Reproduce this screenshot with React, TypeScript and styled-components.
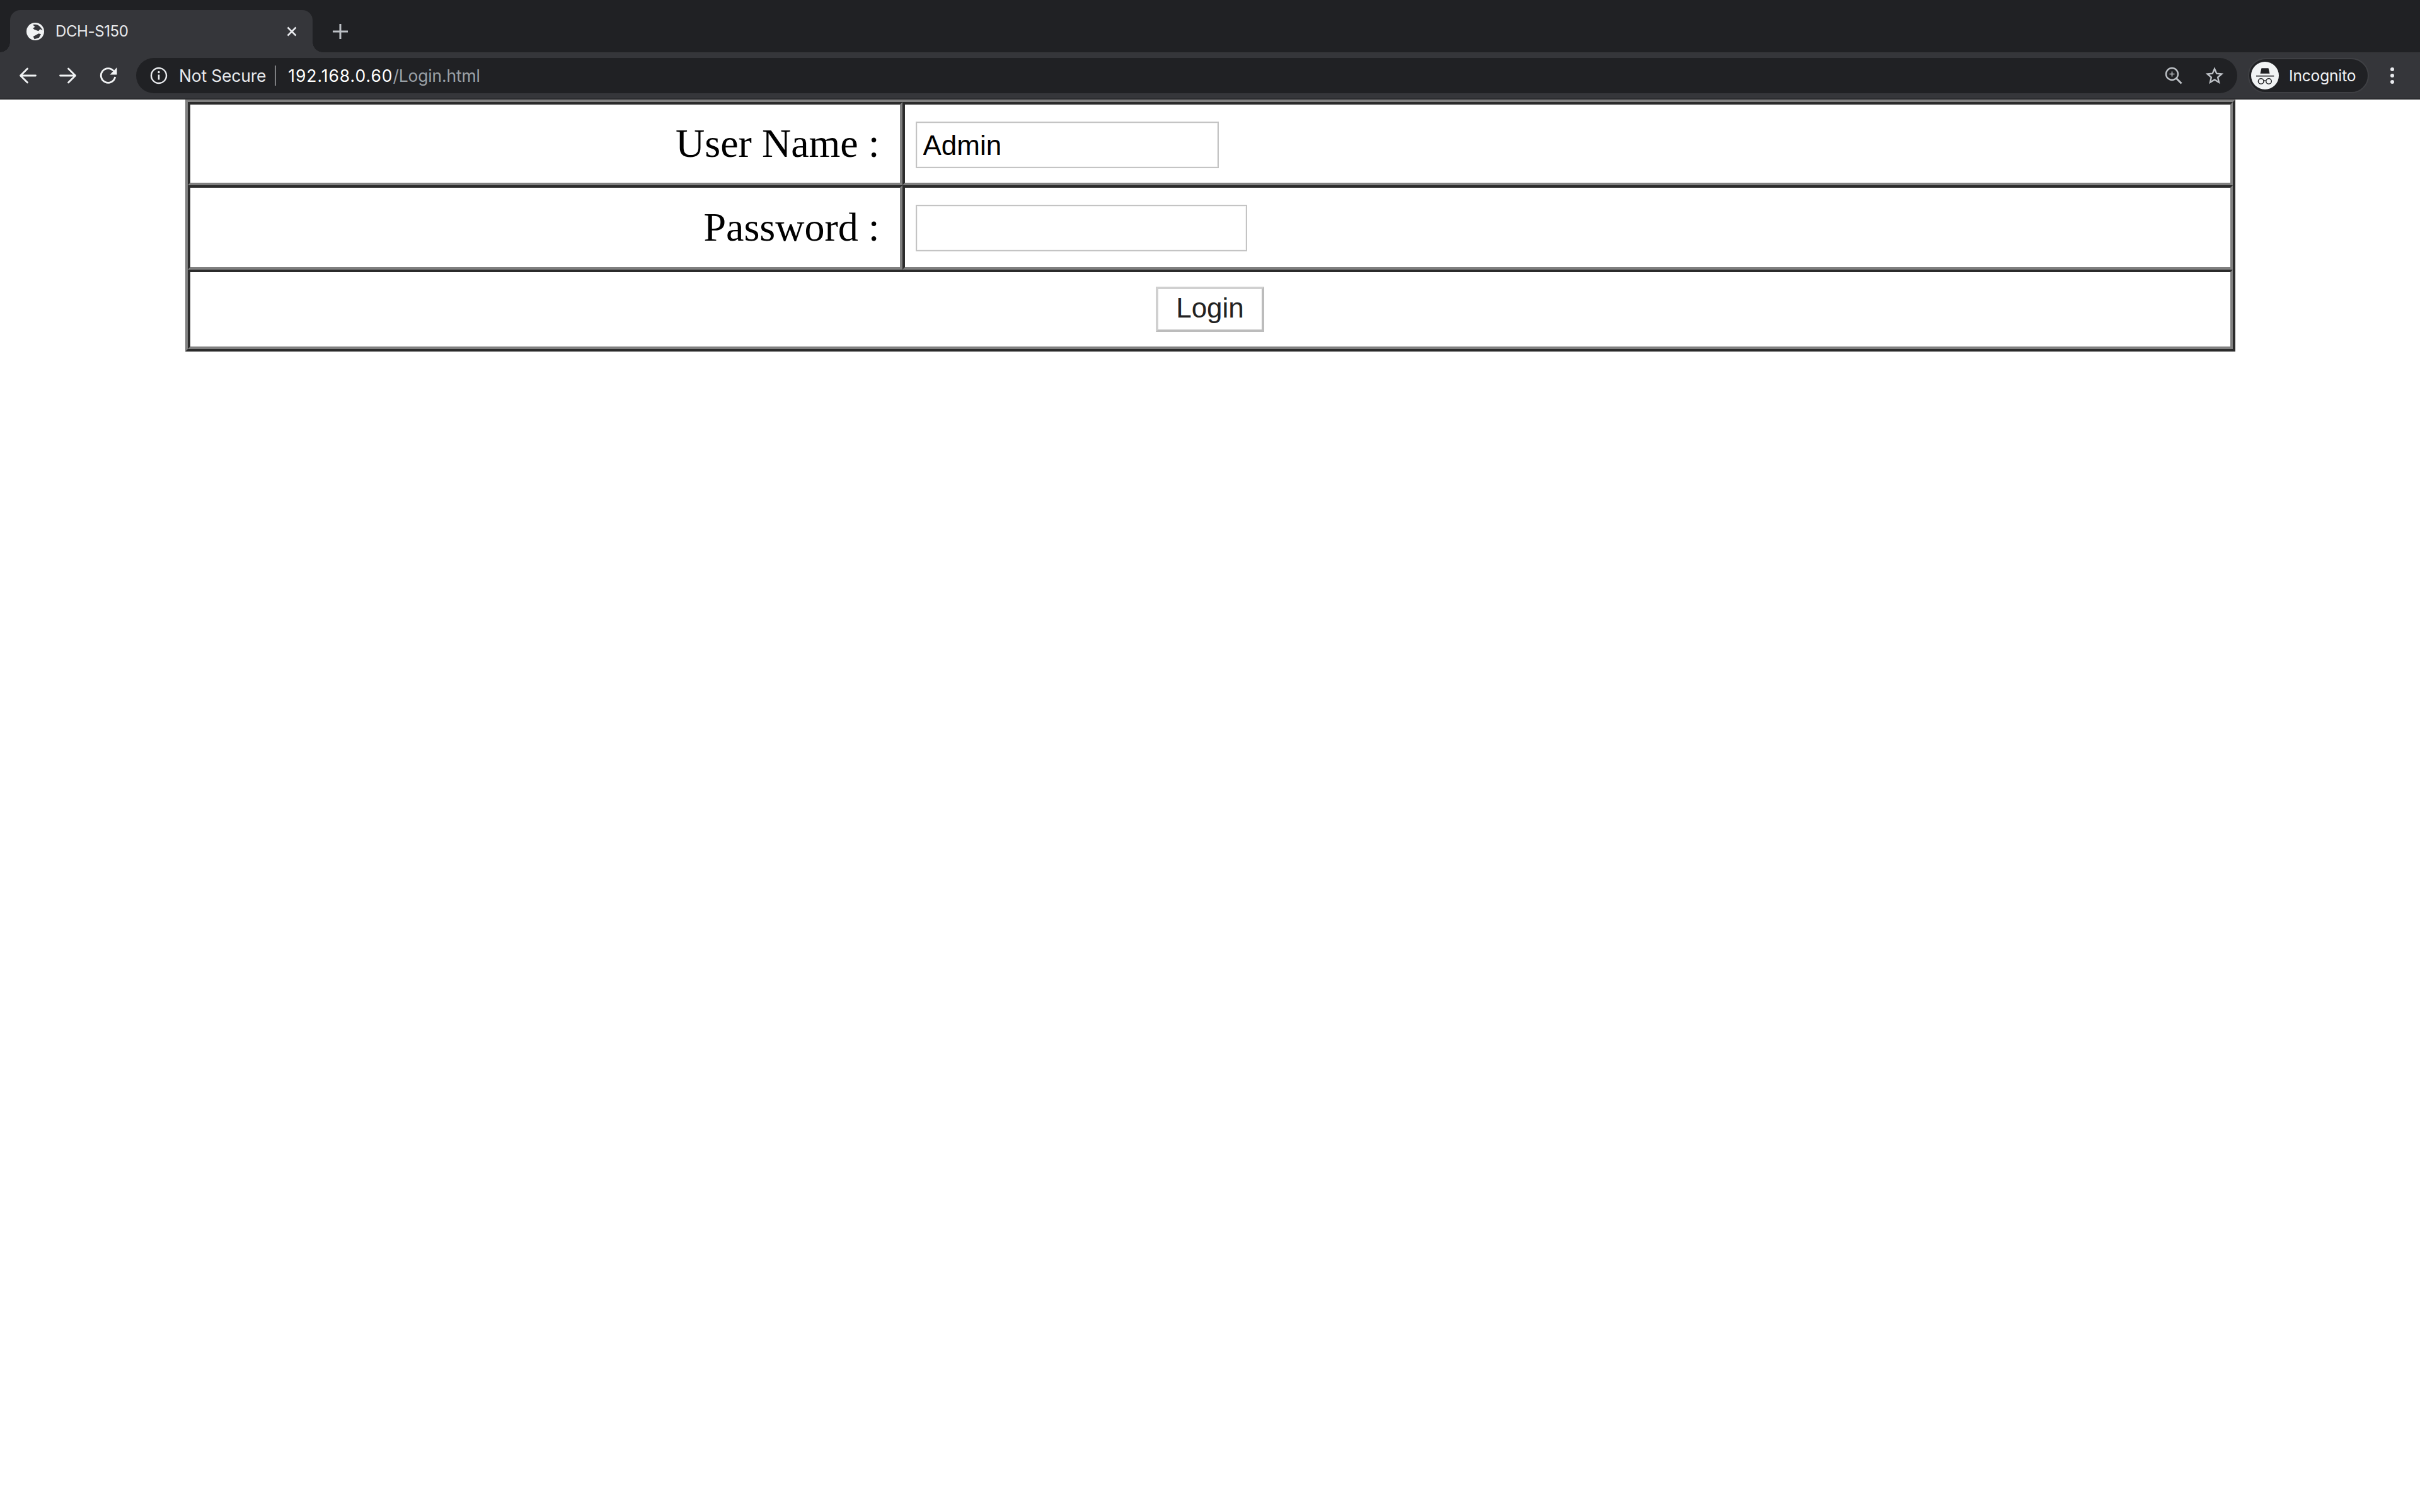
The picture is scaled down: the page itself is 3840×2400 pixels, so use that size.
import React from "react";
import styled, { createGlobalStyle } from "styled-components";

const Global = createGlobalStyle`
  html, body { margin: 0; padding: 0; background: #fff; }
  #root { min-height: 2400px; background: #fff; }
`;

const ChromeFont = `Inter, "Liberation Sans", sans-serif`;

const TabStrip = styled.div`
  height: 83px;
  box-sizing: border-box;
  padding: 16px 0 0 16px;
  background: #202124;
  display: flex;
  align-items: stretch;
`;

const Tab = styled.div`
  position: relative;
  width: 480px;
  box-sizing: border-box;
  padding: 0 23px 0 26px;
  background: #35363a;
  border-radius: 16px 16px 0 0;
  display: flex;
  align-items: center;
  gap: 18px;
  color: #e8eaed;
  &::before, &::after {
    content: "";
    position: absolute;
    bottom: 0;
    width: 16px;
    height: 16px;
  }
  &::before { left: -16px; background: radial-gradient(circle at 0 0, transparent 15.5px, #35363a 16px); }
  &::after { right: -16px; background: radial-gradient(circle at 100% 0, transparent 15.5px, #35363a 16px); }
`;

const TabTitle = styled.span`
  flex: 1;
  font: 400 24px ${ChromeFont};
  letter-spacing: -0.4px;
  color: #e8eaed;
`;

const NewTab = styled.div`
  margin-left: 26px;
  width: 36px;
  display: flex;
  align-items: center;
  justify-content: center;
`;

const Toolbar = styled.div`
  height: 75px;
  box-sizing: border-box;
  padding: 9px 0 8px 12px;
  background: #35363a;
  border-bottom: 2px solid #2a2b2e;
  display: flex;
  align-items: stretch;
`;

const NavButton = styled.div`
  width: 64px;
  display: flex;
  align-items: center;
  justify-content: center;
`;

const Omnibox = styled.div`
  flex: 1;
  margin-left: 12px;
  padding: 0 22px 0 22px;
  background: #202124;
  border-radius: 28px;
  display: flex;
  align-items: center;
`;

const SecurityLabel = styled.span`
  margin-left: 18px;
  padding-right: 14px;
  border-right: 2px solid #7d7e81;
  font: 400 26.5px/32px ${ChromeFont};
  letter-spacing: -0.2px;
  color: #e8eaed;
`;

const Url = styled.span`
  flex: 1;
  margin-left: 19px;
  font: 400 26.5px/32px ${ChromeFont};
  letter-spacing: 0.95px;
  color: #fff;
`;

const UrlPath = styled.span`
  letter-spacing: -0.2px;
  color: #9aa0a6;
`;

const OmniAction = styled.div`
  margin-left: 37px;
  width: 28px;
  display: flex;
  justify-content: center;
`;

const ProfilePill = styled.div`
  margin-left: 17px;
  width: 192px;
  box-sizing: border-box;
  padding: 0 0 0 3px;
  border: 2px solid #3f4044;
  border-radius: 28px;
  background: #202124;
  display: flex;
  align-items: center;
  gap: 16px;
`;

const Avatar = styled.div`
  width: 44px;
  height: 44px;
  border-radius: 50%;
  background: #f1f3f4;
  display: flex;
  align-items: center;
  justify-content: center;
`;

const ProfileName = styled.span`
  font: 400 24.5px ${ChromeFont};
  letter-spacing: -0.15px;
  color: #f1f3f4;
`;

const Kebab = styled.div`
  width: 81px;
  box-sizing: border-box;
  padding-right: 8px;
  display: flex;
  align-items: center;
  justify-content: center;
`;

const Table = styled.table`
  width: 3253px;
  margin: 0 auto;
  table-layout: fixed;
  border-collapse: separate;
  border-spacing: 0;
  border-style: solid;
  border-width: 4px;
  border-color: #808080 #2b2b2b #2b2b2b #808080;
`;

const Cell = styled.td<{ $h: number; $pad?: number }>`
  height: ${(p) => p.$h}px;
  box-sizing: border-box;
  padding: 0 0 0 ${(p) => p.$pad ?? 17}px;
  border-style: solid;
  border-width: 4px;
  border-color: #2b2b2b #808080 #808080 #2b2b2b;
  vertical-align: middle;
`;

const LabelCell = styled(Cell)`
  padding: 0 32px 0 0;
  text-align: right;
  font: 400 64px "Liberation Serif", serif;
  color: #000;
`;

const ActionCell = styled(Cell)`
  text-align: center;
`;

const FieldInput = styled.input<{ $w: number; $top: number }>`
  display: block;
  width: ${(p) => p.$w}px;
  height: 74px;
  margin-top: ${(p) => p.$top}px;
  box-sizing: border-box;
  padding: 1px 10px 0;
  border: 2px solid #c4c4c4;
  box-shadow: inset 0 0 0 1px #f3f3f3;
  background: #fff;
  outline: none;
  font: 400 44px "Liberation Sans", Arial, sans-serif;
  color: #000;
`;

const LoginButton = styled.button`
  width: 172px;
  height: 72px;
  box-sizing: border-box;
  padding: 0 0 4px;
  border-style: solid;
  border-width: 4px;
  border-color: #d0d0d0 #bcbcbc #bcbcbc #d0d0d0;
  background: #fff;
  font: 400 44px "Liberation Sans", Arial, sans-serif;
  color: #222;
`;

const Globe = () => (
  <svg width="28" height="28" viewBox="0 0 84 84">
    <circle cx="42" cy="42" r="42" fill="#f1f3f4" />
    <path d="M30 10C38 6 52 8 60 15 68 22 74 30 77 37L65 31 57 40 38 33 30 26 41 20Z" fill="#35363a" />
    <path d="M32 66L58 52 69 55 60 71 38 79Z" fill="#35363a" />
  </svg>
);

const CloseIcon = () => (
  <svg width="20" height="20" viewBox="0 0 20 20">
    <path d="M3.500 3.500l13 13M16.500 3.500l-13 13" stroke="#e8eaed" strokeWidth="2.600" fill="none" />
  </svg>
);

const PlusIcon = () => (
  <svg width="26" height="26" viewBox="0 0 26 26">
    <path d="M13 1v24M1 13h24" stroke="#bdc1c6" strokeWidth="3" fill="none" />
  </svg>
);

const Arrow = ({ flip }: { flip?: boolean }) => (
  <svg width="28" height="28" viewBox="0 0 28 28" style={flip ? { transform: "scaleX(-1)" } : undefined}>
    <path d="M26.500 14H2.500M13.500 3L2.500 14 13.500 25" stroke="#f1f3f4" strokeWidth="2.800" strokeLinecap="round" strokeLinejoin="round" fill="none" />
  </svg>
);

const Reload = () => (
  <svg width="28" height="28" viewBox="0 0 28 28">
    <path d="M22.500 7A11.300 11.300 0 1 0 24.700 16" stroke="#f1f3f4" strokeWidth="2.800" fill="none" />
    <path d="M27.500 1v11.500H16.500z" fill="#f1f3f4" />
  </svg>
);

const Info = () => (
  <svg width="28" height="28" viewBox="0 0 28 28">
    <circle cx="14" cy="14" r="12" stroke="#e8eaed" strokeWidth="2.400" fill="none" />
    <path d="M14 12.500v8" stroke="#e8eaed" strokeWidth="2.600" />
    <circle cx="14" cy="8.500" r="1.700" fill="#e8eaed" />
  </svg>
);

const ZoomIcon = () => (
  <svg width="28" height="28" viewBox="0 0 28 28">
    <circle cx="11.500" cy="11.500" r="9.500" stroke="#bdc1c6" strokeWidth="2.400" fill="none" />
    <path d="M18.500 18.500l8 8" stroke="#bdc1c6" strokeWidth="3" />
    <path d="M11.500 7.500v8M7.500 11.500h8" stroke="#bdc1c6" strokeWidth="1.600" />
  </svg>
);

const StarIcon = () => (
  <svg width="30" height="30" viewBox="0 0 30 30">
    <path d="M15 3.500l3.500 8 8.500 0.800-6.500 5.700 2 8.500-7.500-4.500-7.500 4.500 2-8.500-6.500-5.700 8.500-0.800z" stroke="#bdc1c6" strokeWidth="2.600" fill="none" />
  </svg>
);

const Hat = () => (
  <svg width="44" height="44" viewBox="0 0 44 44">
    <path d="M16.500 10.300h11L29.500 18.700h-15z" fill="#202124" />
    <path d="M8 22.700h28.300" stroke="#202124" strokeWidth="1.600" />
    <circle cx="15.700" cy="31" r="4.300" stroke="#202124" strokeWidth="1.500" fill="none" />
    <circle cx="28" cy="31" r="4.300" stroke="#202124" strokeWidth="1.500" fill="none" />
    <path d="M20 30.500q1.900-1 3.700 0" stroke="#202124" strokeWidth="1.300" fill="none" />
  </svg>
);

const Dots = () => (
  <svg width="8" height="30" viewBox="0 0 8 30">
    <circle cx="4" cy="5" r="3" fill="#e8eaed" />
    <circle cx="4" cy="15" r="3" fill="#e8eaed" />
    <circle cx="4" cy="25" r="3" fill="#e8eaed" />
  </svg>
);

export default function App() {
  return (
    <>
      <Global />
      <TabStrip>
        <Tab>
          <Globe />
          <TabTitle>DCH-S150</TabTitle>
          <CloseIcon />
        </Tab>
        <NewTab>
          <PlusIcon />
        </NewTab>
      </TabStrip>
      <Toolbar>
        <NavButton><Arrow /></NavButton>
        <NavButton><Arrow flip /></NavButton>
        <NavButton><Reload /></NavButton>
        <Omnibox>
          <Info />
          <SecurityLabel>Not Secure</SecurityLabel>
          <Url>192.168.0.60<UrlPath>/Login.html</UrlPath></Url>
          <OmniAction><ZoomIcon /></OmniAction>
          <OmniAction><StarIcon /></OmniAction>
        </Omnibox>
        <ProfilePill>
          <Avatar><Hat /></Avatar>
          <ProfileName>Incognito</ProfileName>
        </ProfilePill>
        <Kebab><Dots /></Kebab>
      </Toolbar>
      <Table>
        <colgroup>
          <col style={{ width: 1134 }} />
          <col />
        </colgroup>
        <tbody>
          <tr>
            <LabelCell $h={132}>User Name :</LabelCell>
            <Cell $h={132}><FieldInput $w={481} $top={4} defaultValue="Admin" /></Cell>
          </tr>
          <tr>
            <LabelCell $h={134}>Password :</LabelCell>
            <Cell $h={134}><FieldInput $w={526} $top={2} type="password" /></Cell>
          </tr>
          <tr>
            <ActionCell $h={126} $pad={0} colSpan={2}><LoginButton>Login</LoginButton></ActionCell>
          </tr>
        </tbody>
      </Table>
    </>
  );
}
